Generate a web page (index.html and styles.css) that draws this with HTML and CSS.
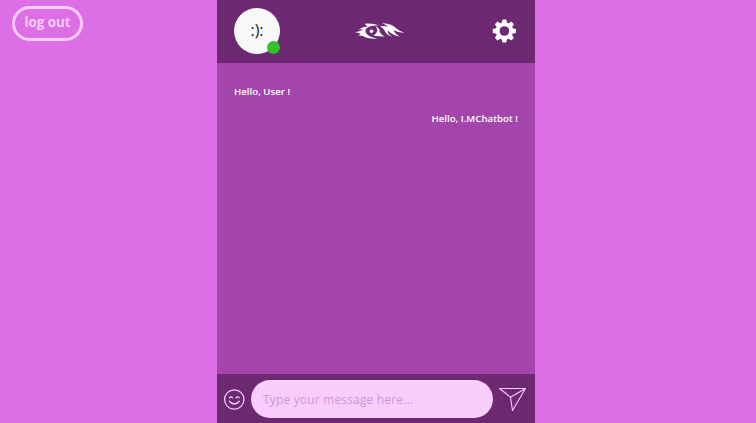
FILE: index.html
```html
<!DOCTYPE html>
<html lang="en">
<head>
<meta charset="utf-8">
<title>I.MChatbot</title>
<link rel="stylesheet" href="styles.css">
</head>
<body>
<div class="page">
  <aside class="side"><button class="logout">log out</button></aside>
  <main class="chat">
    <header class="top">
      <div class="avatar"><span>:):</span><i class="status"></i></div>
      <svg class="logo" viewBox="0 0 50 18" width="50" height="18" fill="#fff" aria-hidden="true">
        <path d="M0 10.300Q5 10 8 7.200L3.500 7.500Q8 4.500 12.500 4.400L9.500 1.800Q17 .8 24 3.600Q18 3.200 14 4.800Q10 6.300 10.500 10Q12 14.500 22.500 16.600Q13 17.200 8 14L3 13.200L6 12Q3 10.500 0 10.300Z"/>
        <circle cx="16.500" cy="9.200" r="1.800"/>
        <path d="M20.500 4.200Q25.500 6.500 24.500 9.500Q25.500 12.500 29.500 14.500Q24 14.500 18.500 13.800Q22 11.500 22.300 9Q22.300 6.500 20.500 4.200Z"/>
        <path d="M25 4.200Q29 3.500 33 5.300Q30.500 2.500 27 1.300Q35 1.300 39.500 5Q43 8.500 49.500 11Q43 10.200 38.500 8.300Q40 12 45 14.800Q37.500 13 33 8.700Q31.500 11 37.500 15Q31 12.500 29.500 8.500Q28 5.500 25 4.200Z"/>
      </svg>
      <svg class="gear" viewBox="-12 -12 24 24" width="24" height="24" aria-hidden="true">
        <g fill="#fff" transform="translate(.4 0)">
          <path id="tooth" d="M-2.700-8L-1.900-11.600H1.900L2.700-8V8L1.900 11.600H-1.900L-2.700 8Z"/>
          <use href="#tooth" transform="rotate(45)"/>
          <use href="#tooth" transform="rotate(90)"/>
          <use href="#tooth" transform="rotate(135)"/>
          <circle r="8.700"/>
        </g>
        <circle cx=".4" r="4.800" fill="#6c2870"/>
      </svg>
    </header>
    <section class="messages">
      <p class="msg">Hello, User !</p>
      <p class="msg mine">Hello, I.MChatbot !</p>
    </section>
    <footer class="composer">
      <svg class="smile" viewBox="0 0 22 22" width="22" height="22" fill="none" stroke="#f6cdfb" stroke-width="1.300" stroke-linecap="round" aria-hidden="true">
        <circle cx="11.300" cy="11.500" r="9.700"/>
        <path d="M6.500 9.800Q8 7.800 9.500 9.800M13.100 9.800Q14.600 7.800 16.100 9.800M6.300 13.300Q11.300 18.700 16.300 13.300"/>
      </svg>
      <input class="field" type="text" placeholder="Type your message here...">
      <svg class="send" viewBox="0 0 28 25" width="28" height="25" fill="none" stroke="#f6cdfb" stroke-width="1.100" stroke-linejoin="round" aria-hidden="true">
        <path d="M.5 1.500H26.500L13.500 23.500L11.500 10.200ZM11.500 10.200L26.500 1.500M.5 1.500L11.500 10.200"/>
      </svg>
    </footer>
  </main>
</div>
</body>
</html>
```
FILE: styles.css
```css
* { box-sizing: border-box; }
body { margin: 0; background: #dc6ee6; font-family: "Open Sans", sans-serif; }
.page { display: grid; grid-template-columns: 217px 318px 1fr; height: 423px; overflow: hidden; }
.side { padding: 6px 12px; }
.logout {
  display: block; width: 71px; height: 35px; padding: 0 0 3px;
  border: 3px solid #f8cdfb; border-radius: 18px; background: none;
  color: #f8cdfb; font: 700 13.3px/20px "Open Sans", sans-serif;
}
.chat { display: grid; grid-template-rows: 63px 311px 49px; background: #a345aa; }
.top {
  display: flex; align-items: center; justify-content: space-between;
  padding: 0 19px 1px 17px; background: #6c2870;
}
.avatar {
  position: relative; display: flex; align-items: center; justify-content: center;
  width: 46px; height: 46px; border-radius: 50%; background: #f8f8f8;
  color: #222; font-size: 16px; line-height: 20px;
}
.avatar span { margin-top: -2px; }
.status {
  position: absolute; right: 0; bottom: 0; width: 13px; height: 13px;
  border-radius: 50%; background: #33c12a;
}
.logo { margin-right: 12px; }
.messages { padding: 21px 17px; }
.msg { margin: 0 0 11px; color: #fff; font-size: 9.7px; line-height: 16px; font-weight: 600; }
.mine { text-align: right; }
.composer {
  display: flex; align-items: center; padding: 1px 8px 0 6px;
  background: #6c2870;
}
.field {
  width: 242px; height: 38px; margin: 0 6px 0 6px; padding: 0 12px;
  border: 0; border-radius: 19px; background: #f8cdfb;
  font: 12px "Open Sans", sans-serif; letter-spacing: .17px; outline: 0;
}
.field::placeholder { color: #cf98d5; opacity: 1; }
.smile, .send { flex: none; }
```
